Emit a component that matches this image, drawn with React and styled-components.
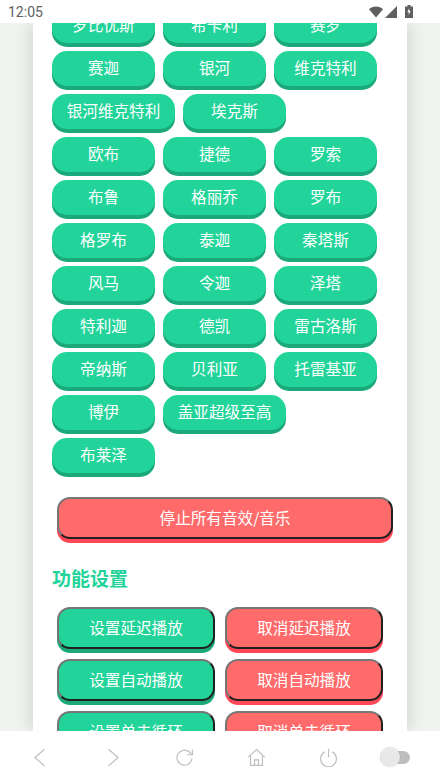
import React from 'react';
import styled, { createGlobalStyle } from 'styled-components';

const heroRows = [
  '罗比优斯', '希卡利', '赛罗', '赛迦', '银河', '维克特利', '银河维克特利', '埃克斯',
  '欧布', '捷德', '罗索', '布鲁', '格丽乔', '罗布', '格罗布', '泰迦', '秦塔斯',
  '风马', '令迦', '泽塔', '特利迦', '德凯', '雷古洛斯', '帝纳斯', '贝利亚', '托雷基亚',
  '博伊', '盖亚超级至高', '布莱泽',
];

const settings = ['延迟播放', '自动播放', '单击循环'];

const App = () => (
  <Screen>
    <GlobalStyle />
    <StatusBar>
      <Clock>12:05</Clock>
      <StatusIcons>
        <svg width="14" height="12" viewBox="0 0 14 12">
          <path d="M0 3.2C1.8 1.3 4.2 0.4 7 0.4s5.2 0.9 7 2.8L7 11.6z" fill="#5f5f5f" />
        </svg>
        <svg width="12" height="12" viewBox="0 0 12 12">
          <path d="M0 12L12 0v12z" fill="#5f5f5f" />
        </svg>
        <BatteryIcon width="8" height="13" viewBox="0 0 8 13">
          <path d="M2.5 0h3v1.4H8V13H0V1.4h2.5z" fill="#5f5f5f" />
          <path d="M4.3 3L2.4 7h1.3v3l1.9-4H4.3z" fill="#fff" />
        </BatteryIcon>
      </StatusIcons>
    </StatusBar>

    <Viewport>
      <Card>
        <HeroList>
          {heroRows.map((name) => (
            <HeroButton key={name}>{name}</HeroButton>
          ))}
        </HeroList>

        <StopButton>停止所有音效/音乐</StopButton>

        <SectionTitle>功能设置</SectionTitle>

        <SettingGrid>
          {settings.map((name) => (
            <React.Fragment key={name}>
              <SettingButton>设置{name}</SettingButton>
              <SettingButton $cancel>取消{name}</SettingButton>
            </React.Fragment>
          ))}
        </SettingGrid>
      </Card>
    </Viewport>

    <BottomBar>
      <NavSlot>
        <NavIcon viewBox="0 0 24 24"><path d="M17 1.500L5 12l12 10.500" /></NavIcon>
      </NavSlot>
      <NavSlot>
        <NavIcon viewBox="0 0 24 24"><path d="M7 1.500L19 12 7 22.500" /></NavIcon>
      </NavSlot>
      <NavSlot>
        <NavIcon viewBox="0 0 24 24">
          <path d="M21.500 13a9.500 9.500 0 1 1-3.200-7.900L21 8" />
          <path d="M22 2v6.500h-6.500" />
        </NavIcon>
      </NavSlot>
      <NavSlot>
        <NavIcon viewBox="0 0 24 24">
          <path d="M1.500 11.500L12 2l10.500 9.500" />
          <path d="M4.500 9.500V22h15V9.500" />
          <path d="M9.500 22v-7h5v7" />
        </NavIcon>
      </NavSlot>
      <NavSlot>
        <NavIcon viewBox="0 0 24 24">
          <path d="M7.500 4.800a10 10 0 1 0 9 0" />
          <path d="M12 1v11" />
        </NavIcon>
      </NavSlot>
      <NavSlot>
        <Toggle />
      </NavSlot>
    </BottomBar>
  </Screen>
);

const GlobalStyle = createGlobalStyle`
  html, body {
    margin: 0;
    padding: 0;
    height: 100%;
  }
  body {
    font-family: "Noto Sans CJK SC", "Noto Sans", sans-serif;
    background: #f2f4f2;
  }
  #root {
    height: 100%;
  }
`;

const Screen = styled.div`
  display: flex;
  flex-direction: column;
  height: 782px;
  overflow: hidden;
`;

const StatusBar = styled.div`
  flex: 0 0 23px;
  display: flex;
  align-items: center;
  justify-content: space-between;
  padding: 0 27px 0 8px;
  background: #fff;
  position: relative;
  z-index: 1;
`;

const Clock = styled.span`
  font-family: Roboto, sans-serif;
  font-size: 14px;
  color: #616161;
`;

const StatusIcons = styled.div`
  display: flex;
  align-items: center;
  gap: 2px;
`;

const BatteryIcon = styled.svg`
  margin-left: 6px;
`;

const Viewport = styled.div`
  flex: 1;
  min-height: 0;
  overflow: hidden;
  padding: 0 33px;
  background: #f1f3f1;
`;

const Card = styled.div`
  display: flow-root;
  background: #fff;
  padding: 0 19px;
  height: 100%;
  box-shadow: 0 0 18px rgba(0, 0, 0, 0.16);
`;

const HeroList = styled.div`
  display: flex;
  flex-wrap: wrap;
  gap: 4px 8px;
  margin-top: -15px;
`;

const HeroButton = styled.button`
  min-width: 103px;
  height: 35px;
  margin-bottom: 4px;
  padding: 0 14.7px 3px;
  border: none;
  border-radius: 15px;
  background: #22d499;
  box-shadow: 0 4px 0 #1ba97c;
  color: #fff;
  font: inherit;
  font-size: 15.6px;
`;

const StopButton = styled.button`
  display: block;
  width: 336px;
  height: 42px;
  margin: 20px 0 0 5px;
  padding: 0 0 2px;
  border: 2px outset #767676;
  border-radius: 13px;
  background: #ff6b6b;
  box-shadow: 0 4px 0 #ff4757;
  color: #fff;
  font: inherit;
  font-size: 15.6px;
`;

const SectionTitle = styled.h2`
  margin: 25px 0 0;
  color: #22d499;
  font-size: 19px;
  font-weight: 700;
  line-height: 28px;
`;

const SettingGrid = styled.div`
  display: grid;
  grid-template-columns: 158px 158px;
  gap: 10px;
  margin: 15px 0 0 5px;
`;

const SettingButton = styled.button`
  height: 42px;
  padding: 0 0 2px;
  border: 2px outset #767676;
  border-radius: 13px;
  background: ${(props) => (props.$cancel ? '#ff6b6b' : '#22d499')};
  box-shadow: 0 4px 0 ${(props) => (props.$cancel ? '#ff4757' : '#1ba97c')};
  color: #fff;
  font: inherit;
  font-size: 15.6px;
`;

const BottomBar = styled.div`
  flex: 0 0 49px;
  display: flex;
  align-items: center;
  padding: 2px 4px 0;
  background: #fff;
  position: relative;
  z-index: 1;
`;

const NavSlot = styled.div`
  flex: 0 0 72px;
  display: flex;
  align-items: center;
  justify-content: center;
`;

const NavIcon = styled.svg`
  width: 19px;
  height: 19px;
  fill: none;
  stroke: #bfbfbf;
  stroke-width: 1.5;
`;

const Toggle = styled.div`
  position: relative;
  width: 30px;
  height: 13px;
  margin-right: 10px;
  border-radius: 7px;
  background: #bdbdbd;

  &::before {
    content: '';
    position: absolute;
    left: 0;
    top: -4px;
    width: 20px;
    height: 20px;
    border-radius: 50%;
    background: #e8e8e8;
    box-shadow: 0 0 2px rgba(0, 0, 0, 0.12);
  }
`;

export default App;
